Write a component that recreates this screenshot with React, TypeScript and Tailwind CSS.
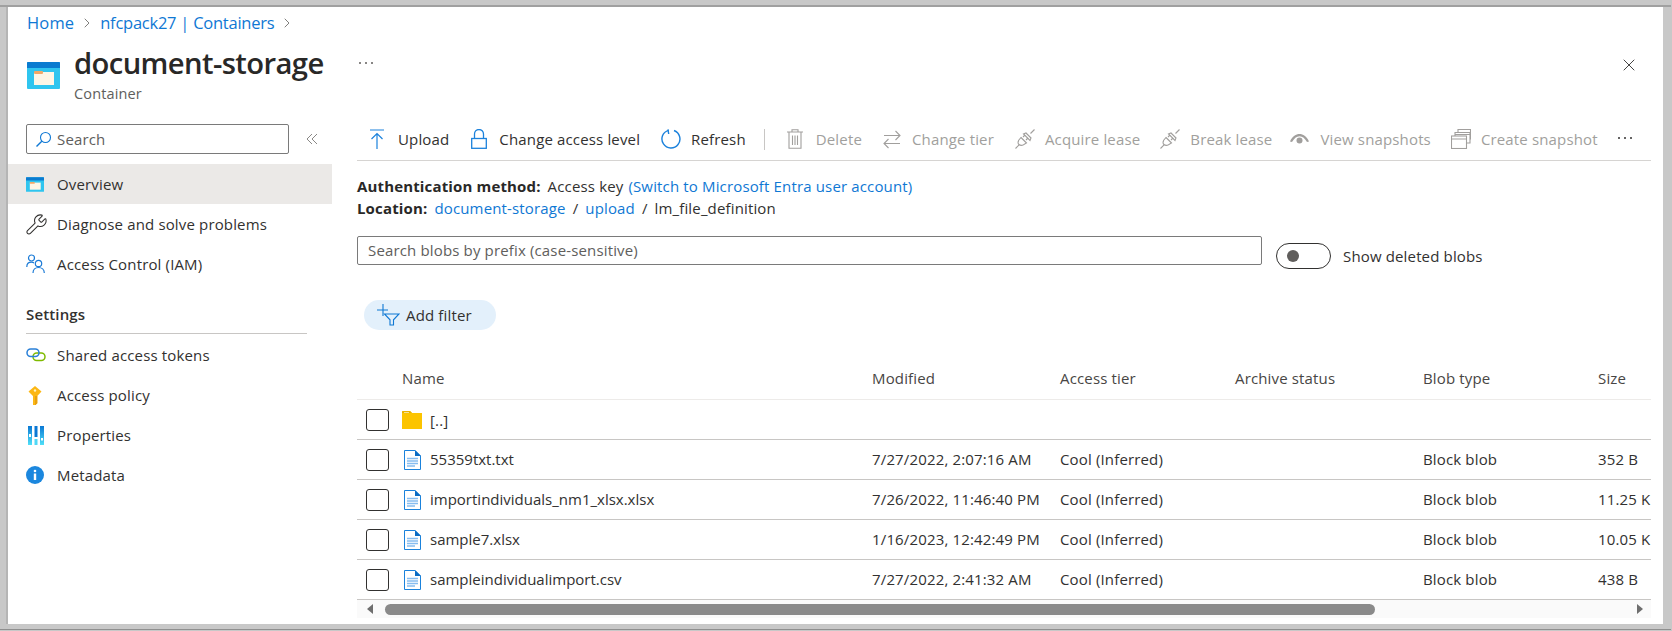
import { ChevronRight, Wrench, X } from 'lucide-react';
import type { ReactNode } from 'react';

const font = "font-['Open_Sans',sans-serif]";

function ContainerIcon({ small }: { small?: boolean }) {
  return (
    <svg width={small ? 18 : 33} height={small ? 15 : 27} viewBox="0 0 33 27">
      <rect width="33" height="27" rx="1" fill="#2fc5ef" />
      <path d="M0 1a1 1 0 0 1 1-1h31a1 1 0 0 1 1 1v5H0z" fill="#0a7bd0" />
      <rect x="7" y="10" width="20" height="13" fill="#fdf6e6" />
      <rect x="7" y="9" width="9" height="3" rx="1" fill="#f0a868" />
    </svg>
  );
}

function SearchIcon() {
  return (
    <svg width="17" height="17" viewBox="0 0 17 17" fill="none" stroke="#0f78d4" strokeWidth="1.1">
      <circle cx="10.5" cy="6.5" r="5" />
      <path d="M6.8 10.2 1.5 15.5" strokeWidth="1.4" />
    </svg>
  );
}

function PeopleIcon() {
  return (
    <svg width="20" height="20" viewBox="0 0 20 20" fill="none" stroke="#1a7ad6" strokeWidth="1.2">
      <circle cx="5.5" cy="4" r="3" />
      <path d="M0.8 13c0-3 2-4.8 4.7-4.8 1 0 1.8.2 2.5.7" />
      <circle cx="12.5" cy="9.5" r="3.2" />
      <path d="M7 19c0-3.300 2.300-5.500 5.500-5.500S18.300 15.700 18.300 19" />
    </svg>
  );
}

function LinkIcon() {
  return (
    <svg width="20" height="14" viewBox="0 0 20 14" fill="none" strokeWidth="1.5">
      <rect x="7" y="5" width="12" height="7.500" rx="3.700" stroke="#7fba00" />
      <rect x="1" y="1" width="12" height="7.500" rx="3.700" stroke="#2a80d8" />
    </svg>
  );
}

function KeyIcon() {
  return (
    <svg width="14" height="19" viewBox="0 0 14 19">
      <path d="M7 0 13.500 5.500 9.300 10V17.300L7.500 19H5V10L.5 5.500z" fill="#fcb714" />
      <path d="M7 10h2.300v7.300L7.500 19H7z" fill="#e8a00e" />
      <circle cx="7" cy="4.500" r="1.200" fill="#fff3c4" />
    </svg>
  );
}

function PropsIcon() {
  return (
    <svg width="16" height="19" viewBox="0 0 16 19">
      <defs>
        <linearGradient id="pg" x1="0" x2="0" y1="0" y2="1">
          <stop offset="0" stopColor="#0a78d4" />
          <stop offset="1" stopColor="#50e0f8" />
        </linearGradient>
      </defs>
      <rect x="0" width="4" height="19" fill="url(#pg)" />
      <rect x="6.500" width="3" height="11" fill="#0a78d4" />
      <rect x="6.500" y="13" width="3" height="6" fill="#50d8f6" />
      <rect x="12" width="4" height="19" fill="url(#pg)" />
      <rect x="1" y="8" width="2" height="3" fill="#fff" />
      <rect x="13" y="12" width="2" height="2.500" fill="#fff" />
    </svg>
  );
}

function InfoIcon() {
  return (
    <svg width="18" height="18" viewBox="0 0 18 18">
      <circle cx="9" cy="9" r="9" fill="#1b87de" />
      <circle cx="9" cy="5" r="1.300" fill="#fff" />
      <rect x="7.800" y="7.500" width="2.400" height="6.500" fill="#fff" />
    </svg>
  );
}

function UploadIcon() {
  return (
    <svg width="14" height="20" viewBox="0 0 14 20" fill="none" stroke="#1c82dc" strokeWidth="1.200">
      <path d="M0 1h14M7 20V4.500M1.500 10 7 4.500 12.500 10" />
    </svg>
  );
}

function LockIcon() {
  return (
    <svg width="16" height="20" viewBox="0 0 16 20" fill="none" stroke="#1c82dc" strokeWidth="1.300">
      <rect x=".7" y="9.500" width="14.600" height="9.800" />
      <path d="M3.500 9.500V5a4.500 4.500 0 0 1 9 0v4.500" />
    </svg>
  );
}

function RefreshIcon() {
  return (
    <svg width="20" height="20" viewBox="0 0 20 20" fill="none" stroke="#1c82dc" strokeWidth="1.400">
      <path d="M7.500 1.300A9 9 0 1 0 13 1.500" />
      <path d="M7 .3 7.700 5" />
    </svg>
  );
}

function TrashIcon() {
  return (
    <svg width="16" height="20" viewBox="0 0 16 20" fill="none" stroke="#a19f9d" strokeWidth="1.100">
      <path d="M0 3h16M5 3V.7h6V3M2 3v16.300h12V3M5.500 6.500v9.500M8 6.500v9.500M10.500 6.500v9.500" />
    </svg>
  );
}

function SwapIcon() {
  return (
    <svg width="18" height="19" viewBox="0 0 18 19" fill="none" stroke="#a19f9d" strokeWidth="1.100">
      <path d="M1 5.500h16M12.500 1 17 5.500 12.500 10M17 13.500H1M5.500 9 1 13.500 5.500 18" />
    </svg>
  );
}

function PlugIcon() {
  return (
    <svg width="20" height="20" viewBox="0 0 20 20" fill="none" stroke="#a19f9d" strokeWidth="1.100">
      <path d="M.5 19.500 4.300 15.700M15.500 4.500 19.500.5" />
      <path d="M6 8.500 11.500 14 8.500 15.800C6.500 16.800 5 16.300 4 15.500 3 14.500 2.700 13 3.700 11.200z" />
      <path d="M11 4 16 9 15 11.500 8.500 5z" />
      <path d="M8 8 10 6M11 11 13 9" />
    </svg>
  );
}

function EyeIcon() {
  return (
    <svg width="19" height="12" viewBox="0 0 19 12">
      <path d="M0 8.500C2.500 3 6 1 9.500 1S16.500 3 19 8.500L17 9C15 5.500 12.500 3.200 9.500 3.200S4 5.500 2 9z" fill="#a19f9d" />
      <circle cx="9.500" cy="7.500" r="3" fill="#a19f9d" />
    </svg>
  );
}

function SnapshotIcon() {
  return (
    <svg width="20" height="20" viewBox="0 0 20 20" fill="none" stroke="#a19f9d" strokeWidth="1.100">
      <rect x=".5" y="7" width="15" height="12.500" />
      <path d="M.5 10h15M4 7V3.500h15V14h-3.500M4 5.500h15M7 3.500V.5h12.500v10" />
    </svg>
  );
}

function Dots({ color = '#323130' }: { color?: string }) {
  return (
    <svg width="16" height="4" viewBox="0 0 16 4" fill={color}>
      <circle cx="2" cy="2" r="1" />
      <circle cx="8" cy="2" r="1" />
      <circle cx="14" cy="2" r="1" />
    </svg>
  );
}

function FilterIcon() {
  return (
    <svg width="23" height="22" viewBox="0 0 23 22" fill="none" stroke="#0f78d4" strokeWidth="1.100">
      <path d="M6 0v12M0 6h11" />
      <path d="M7.500 10h14.500l-5.500 5.800V21h-3.500v-5.200z" />
    </svg>
  );
}

function FolderIcon() {
  return (
    <svg width="20" height="18" viewBox="0 0 20 18">
      <path d="M0 1a1 1 0 0 1 1-1h7l2 2h10v16H0z" fill="#fcc400" />
      <path d="M0 2h10L8 0H1a1 1 0 0 0-1 1z" fill="#e8b100" />
      <rect x="2" y="1" width="5" height="1" fill="#f5e199" />
    </svg>
  );
}

function FileIcon() {
  return (
    <svg width="17" height="20" viewBox="0 0 17 20">
      <path d="M.5.5H11L16.500 6V19.500H.5z" fill="#fff" stroke="#1a82dc" />
      <path d="M11 0 17 6H11z" fill="#0a6cc4" />
      <path d="M3 8.500h11M3 11h11M3 13.500h11M3 16h8" stroke="#86bdf0" strokeWidth="1.300" />
    </svg>
  );
}

function NavItem({ icon, label, active }: { icon: ReactNode; label: string; active?: boolean }) {
  return (
    <div className={`flex h-10 items-center pl-[18px] text-[#323130] ${active ? 'bg-[#ebe9e7]' : ''}`}>
      <span className="flex w-[31px] items-center">{icon}</span>
      <span>{label}</span>
    </div>
  );
}

function ToolItem({ icon, label, disabled, gap }: { icon: ReactNode; label: string; disabled?: boolean; gap: string }) {
  return (
    <div className={`flex items-center ${gap} ${disabled ? 'text-[#a19f9d]' : 'text-[#323130]'}`}>
      {icon}
      <span>{label}</span>
    </div>
  );
}

const columns = 'grid grid-cols-[45px_470px_188px_175px_188px_175px_53px] items-center';

const rows = [
  { name: '55359txt.txt', modified: '7/27/2022, 2:07:16 AM', size: '352 B' },
  { name: 'importindividuals_nm1_xlsx.xlsx', modified: '7/26/2022, 11:46:40 PM', size: '11.25 KiB' },
  { name: 'sample7.xlsx', modified: '1/16/2023, 12:42:49 PM', size: '10.05 KiB' },
  { name: 'sampleindividualimport.csv', modified: '7/27/2022, 2:41:32 AM', size: '438 B' },
];

function Checkbox() {
  return <span className="ml-[9px] block h-[22px] w-[23px] rounded-[3px] border border-[#323130] bg-white" />;
}

export default function App() {
  return (
    <div className={`h-[631px] w-[1672px] overflow-hidden bg-[#c8c8c8] pb-[1px] pr-[1px] pt-[5px] ${font} text-[15px] tracking-[0.15px] text-[#323130]`}>
      <div className="h-[625px] border-b border-t-2 border-b-[#8f8f8f] border-t-[#a0a0a0] pb-[5px] pl-[6px] pr-[8px]">
        <div className="h-full border-l-2 border-l-[#b5b5b5] bg-white">
          {/* Breadcrumb */}
          <div className="flex h-[32px] items-center pl-[19px] text-[16.5px] text-[#0f78d4]">
            <span>Home</span>
            <ChevronRight className="mx-[5px] h-[16px] w-[16px] text-[#605e5c]" strokeWidth={1.2} />
            <span className="tracking-[-0.25px]">nfcpack27 | Containers</span>
            <ChevronRight className="mx-[5px] h-[16px] w-[16px] text-[#605e5c]" strokeWidth={1.2} />
          </div>

          {/* Title */}
          <div className="flex h-[85px] items-start pl-[19px] pr-[24px]">
            <div className="mt-[23px] mr-[14px]">
              <ContainerIcon />
            </div>
            <div className="w-[285px] pt-[6px]">
              <div className="whitespace-nowrap text-[29.2px] font-semibold leading-[36px] tracking-[-0.6px] text-[#292827]">document-storage</div>
              <div className="mt-[4px] text-[14.5px] leading-[18px] text-[#605e5c]">Container</div>
            </div>
            <div className="ml-[-1px] mt-[22px]">
              <Dots color="#605e5c" />
            </div>
            <div className="ml-auto mt-[16px]">
              <X className="h-[20px] w-[20px] text-[#323130]" strokeWidth={1.1} />
            </div>
          </div>

          <div className="flex">
            {/* Sidebar */}
            <div className="w-[324px] shrink-0">
              <div className="flex h-[40px] items-start pl-[18px]">
                <div className="flex h-[30px] w-[263px] items-center gap-[5px] rounded-[2px] border border-[#7a7a7a] pl-[8px] text-[#605e5c]">
                  <SearchIcon />
                  <span>Search</span>
                </div>
                <svg className="ml-[17px] mt-[9px]" width="12" height="12" viewBox="0 0 12 12" fill="none" stroke="#8a8886" strokeWidth="1">
                  <path d="M6 1 1 6l5 5M11 1 6 6l5 5" />
                </svg>
              </div>
              <NavItem active icon={<ContainerIcon small />} label="Overview" />
              <NavItem icon={<Wrench className="-ml-[1px] h-[23px] w-[23px] text-[#323130]" strokeWidth={1.1} />} label="Diagnose and solve problems" />
              <NavItem icon={<PeopleIcon />} label="Access Control (IAM)" />
              <div className="ml-[18px] mr-[25px] mt-[20px] flex h-[30px] items-center border-b border-[#c8c6c4] pb-[8px] font-semibold">
                Settings
              </div>
              <div className="mt-[1px]">
                <NavItem icon={<LinkIcon />} label="Shared access tokens" />
                <NavItem icon={<span className="ml-[2px]"><KeyIcon /></span>} label="Access policy" />
                <NavItem icon={<span className="ml-[2px]"><PropsIcon /></span>} label="Properties" />
                <NavItem icon={<InfoIcon />} label="Metadata" />
              </div>
            </div>

            {/* Main panel */}
            <div className="ml-[25px] w-[1294px]">
              <div className="flex h-[37px] items-center border-b border-[#d6d4d2] pb-[6px] pl-[13px]">
                <ToolItem gap="gap-[14px]" icon={<UploadIcon />} label="Upload" />
                <ToolItem gap="gap-[12px] ml-[22px]" icon={<LockIcon />} label="Change access level" />
                <ToolItem gap="gap-[10px] ml-[21px]" icon={<RefreshIcon />} label="Refresh" />
                <span className="ml-[18px] h-[21px] w-px bg-[#c8c6c4]" />
                <ToolItem disabled gap="gap-[13px] ml-[22px]" icon={<TrashIcon />} label="Delete" />
                <ToolItem disabled gap="gap-[11px] ml-[21px]" icon={<SwapIcon />} label="Change tier" />
                <ToolItem disabled gap="gap-[10px] ml-[21px]" icon={<PlugIcon />} label="Acquire lease" />
                <ToolItem disabled gap="gap-[10px] ml-[20px]" icon={<PlugIcon />} label="Break lease" />
                <ToolItem disabled gap="gap-[11px] ml-[18px]" icon={<EyeIcon />} label="View snapshots" />
                <ToolItem disabled gap="gap-[10px] ml-[20px]" icon={<SnapshotIcon />} label="Create snapshot" />
                <span className="ml-[19px] mb-[3px]">
                  <Dots />
                </span>
              </div>

              <div className="mt-[14px] flex h-[22px] items-center">
                <span className="font-bold text-[#292827]">Authentication method:</span>
                <span className="ml-[7px]">Access key</span>
                <span className="ml-[5px] text-[#0f78d4]">(Switch to Microsoft Entra user account)</span>
              </div>
              <div className="flex h-[22px] items-center">
                <span className="font-bold text-[#292827]">Location:</span>
                <span className="ml-[7px] text-[#0f78d4]">document-storage</span>
                <span className="mx-[7px]">/</span>
                <span className="text-[#0f78d4]">upload</span>
                <span className="mx-[7px]">/</span>
                <span>lm_file_definition</span>
              </div>

              <div className="mt-[17px] flex items-start">
                <div className="flex h-[29px] w-[905px] items-center rounded-[2px] border border-[#7a7a7a] pl-[10px] text-[#605e5c]">
                  Search blobs by prefix (case-sensitive)
                </div>
                <div className="ml-[14px] mt-[7px] flex h-[26px] w-[55px] items-center rounded-full border border-[#323130] pl-[10px]">
                  <span className="h-[12px] w-[12px] rounded-full bg-[#605e5c]" />
                </div>
                <span className="ml-[12px] mt-[7px] flex h-[26px] items-center">Show deleted blobs</span>
              </div>

              <div className="ml-[7px] mt-[31px] flex h-[30px] w-[132px] items-center gap-[6px] rounded-full bg-[#e3f0fb] pl-[13px]">
                <FilterIcon />
                <span>Add filter</span>
              </div>

              {/* Blob table */}
              <div className="mt-[28px] overflow-hidden">
                <div className={`${columns} h-[42px] border-b border-[#edebe9] font-medium text-[#484644]`}>
                  <span />
                  <span>Name</span>
                  <span>Modified</span>
                  <span>Access tier</span>
                  <span>Archive status</span>
                  <span>Blob type</span>
                  <span>Size</span>
                </div>
                <div className={`${columns} h-[40px] border-b border-[#c8c6c4]`}>
                  <Checkbox />
                  <div className="flex items-center gap-[8px]">
                    <FolderIcon />
                    <span className="mt-[2px]">[..]</span>
                  </div>
                </div>
                {rows.map((row) => (
                  <div key={row.name} className={`${columns} h-[40px] border-b border-[#c8c6c4]`}>
                    <Checkbox />
                    <div className="ml-[2px] flex items-center gap-[9px]">
                      <FileIcon />
                      <span className="tracking-normal">{row.name}</span>
                    </div>
                    <span>{row.modified}</span>
                    <span>Cool (Inferred)</span>
                    <span />
                    <span>Block blob</span>
                    <span className="overflow-hidden whitespace-nowrap">{row.size}</span>
                  </div>
                ))}
                {/* Scrollbar */}
                <div className="flex h-[18px] items-center bg-[#fafafa] pl-[10px]">
                  <svg width="6" height="10" viewBox="0 0 6 10" fill="#6e6e6e">
                    <path d="M6 0v10L0 5z" />
                  </svg>
                  <span className="ml-[12px] h-[11px] w-[990px] rounded-full bg-[#8a8a8a]" />
                  <svg className="ml-[262px]" width="6" height="10" viewBox="0 0 6 10" fill="#6e6e6e">
                    <path d="M0 0v10l6-5z" />
                  </svg>
                </div>
              </div>
            </div>
          </div>
        </div>
      </div>
    </div>
  );
}
